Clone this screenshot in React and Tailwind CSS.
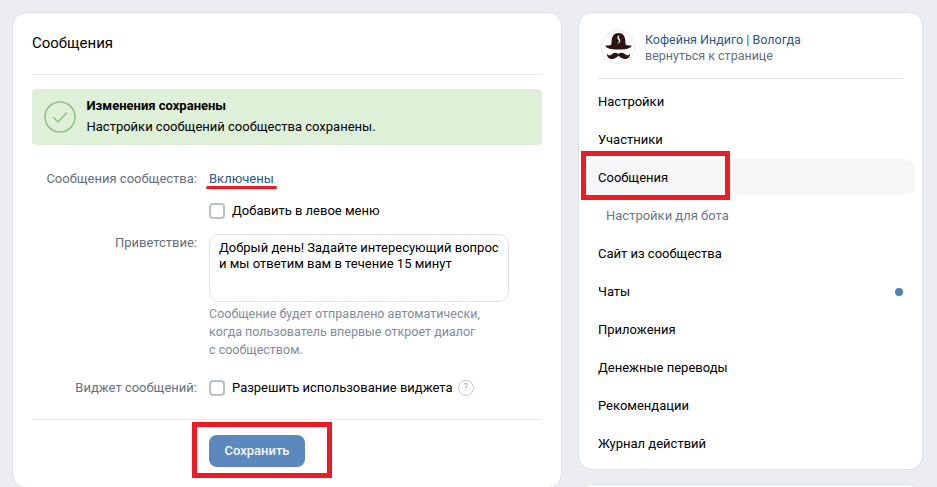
import React from 'react';

const menu = [
  { label: 'Настройки' },
  { label: 'Участники' },
  { label: 'Сообщения', active: true },
  { label: 'Настройки для бота', sub: true },
  { label: 'Сайт из сообщества' },
  { label: 'Чаты', dot: true },
  { label: 'Приложения' },
  { label: 'Денежные переводы' },
  { label: 'Рекомендации' },
  { label: 'Журнал действий' },
];

function Checkbox() {
  return <span className="block w-4 h-4 shrink-0 rounded-[4px] border-2 border-[#b8c1cc] bg-white" />;
}

function FormRow({ label, className, children }) {
  return (
    <div className={`flex ${className}`}>
      <div className="w-[177px] shrink-0 text-right text-[#656f7d] pr-3">{label}</div>
      <div className="flex-1">{children}</div>
    </div>
  );
}

function Avatar() {
  return (
    <svg width="34" height="34" viewBox="0 0 34 34" className="shrink-0">
      <circle cx="17" cy="17" r="16.5" fill="#fff" stroke="#e7e8ec" />
      <path d="M10.500 14 C10.500 7 12 3 17.500 3 C23 3 24.500 7 24.500 14 C24.500 15 27 15.500 30.500 15.500 C30.500 18 26 19.500 17.500 19.500 C9 19.500 4.500 18 4.500 15.500 C8 15.500 10.500 15 10.500 14 Z" fill="#2e1512" />
      <path d="M18.800 5 C15.800 6.200 16 8 17.300 9.500 C18.300 10.800 18 12.300 16.300 14 C19.300 13 20 10.800 18.700 9 C17.700 7.700 17.500 6.200 18.800 5 Z" fill="#fff" />
      <path d="M17.500 24 C15 21.800 12.500 22.500 10.500 24.500 C9 26 7 25.500 6 23.500 C5.500 27 8.500 29.800 12.500 28.800 C14.800 28.200 16.500 26.800 17.500 25.800 C18.500 26.800 20.200 28.200 22.500 28.800 C26.500 29.800 29.500 27 29 23.500 C28 25.500 26 26 24.500 24.500 C22.500 22.500 20 21.800 17.500 24 Z" fill="#2e1512" />
    </svg>
  );
}

export default function App() {
  return (
    <div className="relative h-[487px] w-[937px] overflow-hidden bg-[#ebedf0] font-['Roboto',sans-serif] text-[13px] leading-[18px] text-black">
      <div className="flex items-start gap-4 pl-3 pt-3">

        <div className="w-[550px] h-[476px] shrink-0 rounded-[14px] border border-[#dce1e6] bg-white px-[19px]">
          <h1 className="h-[62px] border-b border-[#e7e8ec] pt-[20px] text-[15px] leading-5 font-normal">Сообщения</h1>

          <div className="mt-[14px] flex h-14 items-center rounded bg-[#dff0d8] pl-3">
            <svg width="32" height="32" viewBox="0 0 32 32" className="shrink-0">
              <circle cx="16" cy="16" r="15" fill="none" stroke="#8fc082" strokeWidth="1.500" />
              <path d="M9.500 16.500 L14 21 L22.500 12" fill="none" stroke="#8fc082" strokeWidth="1.500" strokeLinecap="round" strokeLinejoin="round" />
            </svg>
            <div className="ml-[11px] -mt-[2px] -translate-x-[0.5px]">
              <div className="font-bold leading-[17px]">Изменения сохранены</div>
              <div className="mt-[3px] leading-[19px]">Настройки сообщений сообщества сохранены.</div>
            </div>
          </div>

          <FormRow label="Сообщения сообщества:" className="mt-[25px]">
            <span className="text-[#2a5885]">Включены</span>
          </FormRow>

          <FormRow className="mt-[14px]">
            <label className="flex items-center gap-[7px]">
              <Checkbox />
              <span>Добавить в левое меню</span>
            </label>
          </FormRow>

          <FormRow label="Приветствие:" className="mt-[14px]">
            <div className="h-[68px] w-[300px] rounded-[10px] border border-[#dce1e6] px-[9px] pt-[5px] leading-[15.5px]">
              Добрый день! Задайте интересующий вопрос<br />и мы ответим вам в течение 15 минут
            </div>
            <p className="mt-[3px] text-[12.5px] text-[#818c99]">
              Сообщение будет отправлено автоматически,<br />когда пользователь впервые откроет диалог<br />с сообществом.
            </p>
          </FormRow>

          <FormRow label="Виджет сообщений:" className="mt-[20px] items-center">
            <label className="flex items-center gap-[7px]">
              <Checkbox />
              <span>Разрешить использование виджета</span>
              <span className="-ml-[2px] flex h-4 w-4 items-center justify-center rounded-full border border-[#c4c8cc] text-[10px] text-[#aeb7c2]">?</span>
            </label>
          </FormRow>

          <div className="mt-[22px] border-t border-[#e7e8ec] pl-[177px] pt-[15px]">
            <button className="h-8 w-24 rounded-lg bg-[#5b88bd] text-center font-medium text-[#f5f8fb]">Сохранить</button>
          </div>
        </div>

        <div className="flex w-[345px] shrink-0 flex-col gap-[14px]">
          <div className="h-[458px] rounded-[14px] border border-[#dce1e6] bg-white px-[7px]">
            <div className="mx-3 flex h-[66px] items-start gap-[10px] border-b border-[#dce1e6] pl-[3px] pt-[17px]">
              <Avatar />
              <div className="mt-[2px] text-[12.5px] leading-4">
                <div className="text-[#2a5885]">Кофейня Индиго | Вологда</div>
                <div className="text-[#656f7d]">вернуться к странице</div>
              </div>
            </div>
            <nav className="mt-[4px]">
              {menu.map((item) => (
                <div
                  key={item.label}
                  className={`flex h-[36px] mb-[2px] pt-[2px] items-center justify-between rounded-[10px] pr-3 ${item.active ? 'bg-[#f5f6f8]' : ''} ${item.sub ? 'pl-5 text-[#6d7885]' : 'pl-3 text-black'} `}
                >
                  <span>{item.label}</span>
                  {item.dot && <span className="h-2 w-2 rounded-full bg-[#5181b8]" />}
                </div>
              ))}
            </nav>
          </div>
          <div className="h-20 rounded-[14px] border border-[#dce1e6] bg-white" />
        </div>
      </div>

      {/* red marks drawn over the screenshot */}
      <div className="absolute left-[206px] top-[186px] h-[3px] w-[71px] rounded-full bg-[#ed1c24]" />
      <div className="absolute left-[192px] top-[422px] h-[56px] w-[140px] border-[5px] border-[#ed1c24]" />
      <div className="absolute left-[581px] top-[151px] h-[49px] w-[149px] border-[5px] border-[#ed1c24]" />
    </div>
  );
}
